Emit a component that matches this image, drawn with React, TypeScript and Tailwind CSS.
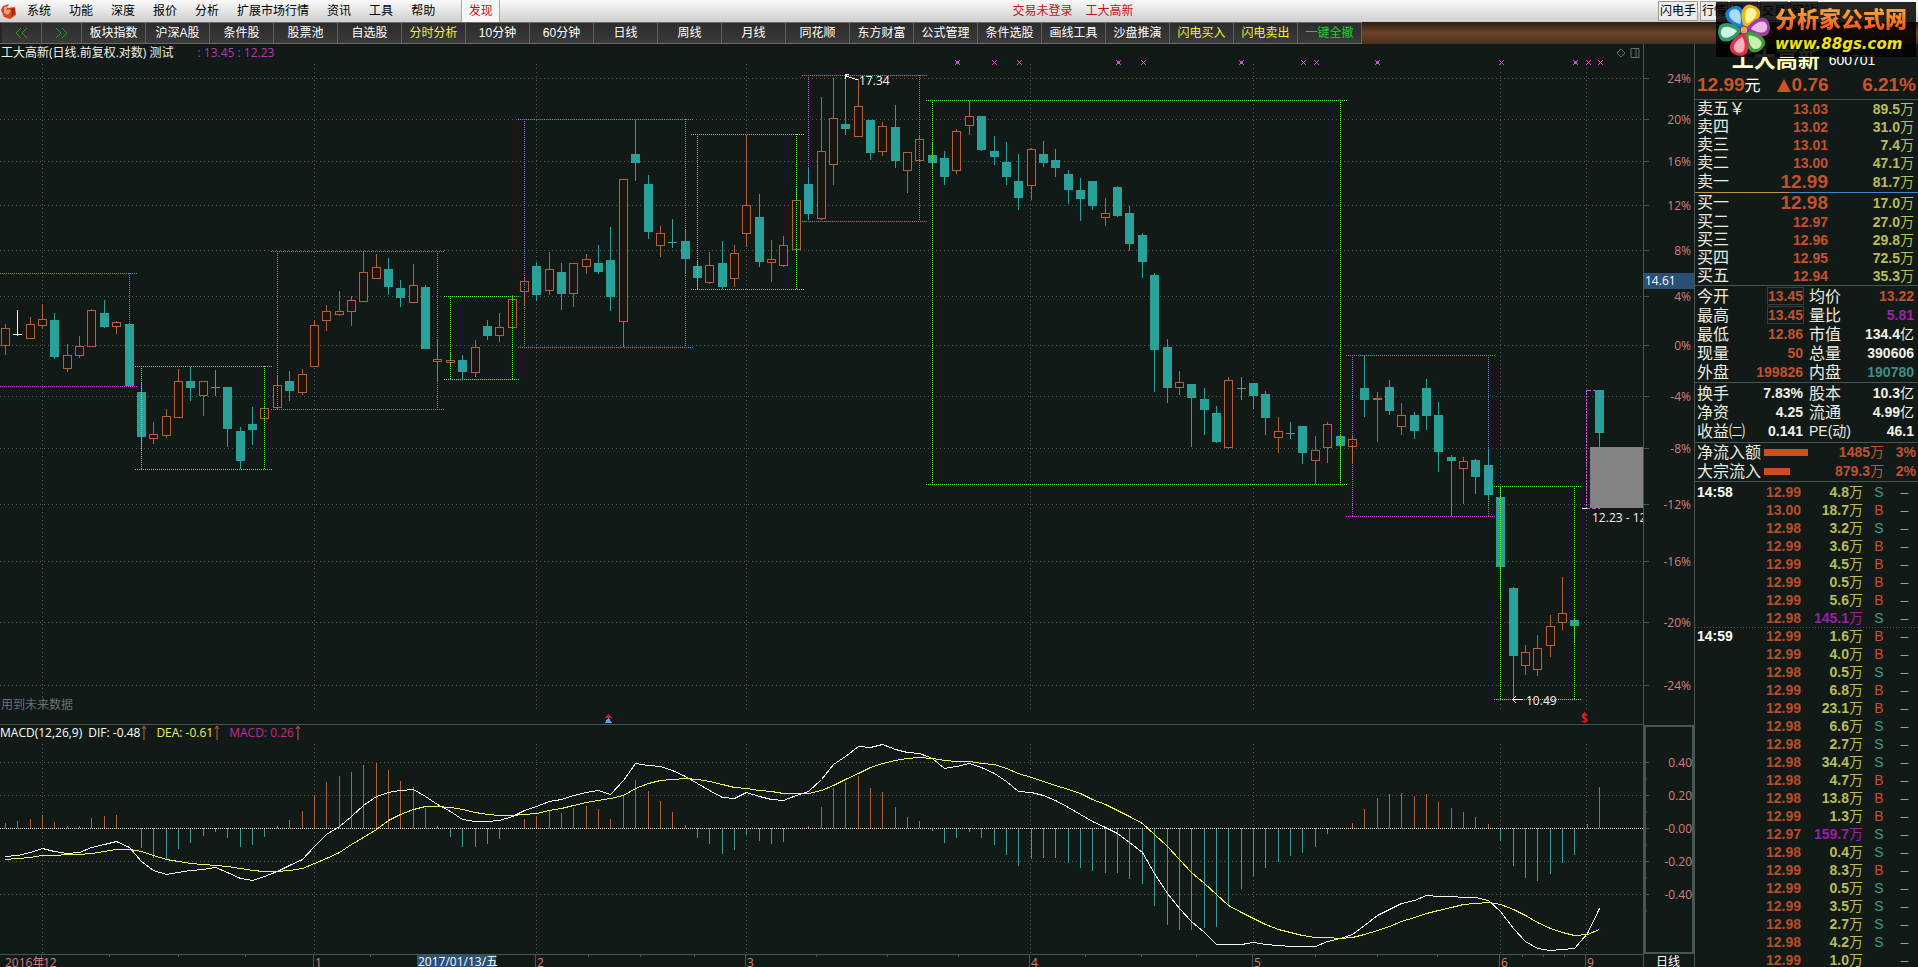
import { clsx } from "clsx";

type Candle = [string, number, number, number, number];

const MENU = ["系统", "功能", "深度", "报价", "分析", "扩展市场行情", "资讯", "工具", "帮助"];

const TOOLS = [
  "板块指数", "沪深A股", "条件股", "股票池", "自选股", "分时分析", "10分钟",
  "60分钟", "日线", "周线", "月线", "同花顺", "东方财富", "公式管理",
  "条件选股", "画线工具", "沙盘推演", "闪电买入", "闪电卖出", "一键全撤",
];
const YELLOW_TOOLS = ["分时分析", "闪电买入", "闪电卖出"];

// kind, high, body top, body bottom, low
// u = up, d = down, x = flat, w = flat (white), n = no trade
const CANDLES: Candle[] = [
  ["u", 324, 328, 346, 355], ["w", 310, 334, 334, 336], ["u", 317, 324, 339, 339],
  ["u", 304, 319, 326, 328], ["d", 313, 320, 357, 359], ["u", 344, 355, 369, 372],
  ["u", 336, 346, 356, 358], ["u", 309, 310, 347, 347], ["d", 300, 313, 327, 328],
  ["u", 321, 322, 327, 334], ["d", 324, 324, 386, 386], ["d", 382, 392, 437, 450],
  ["u", 422, 434, 439, 444], ["u", 409, 416, 436, 438], ["u", 369, 381, 418, 418],
  ["d", 367, 381, 388, 401], ["u", 381, 381, 396, 416], ["x", 370, 387, 387, 396],
  ["d", 387, 387, 429, 447], ["d", 427, 431, 461, 469], ["d", 407, 424, 430, 445],
  ["u", 406, 408, 419, 421], ["u", 376, 385, 408, 409], ["d", 371, 381, 391, 401],
  ["u", 369, 374, 393, 395], ["u", 320, 325, 367, 367], ["u", 305, 311, 321, 331],
  ["u", 291, 311, 315, 316], ["u", 296, 300, 312, 326], ["u", 252, 272, 302, 302],
  ["u", 254, 267, 279, 279], ["d", 258, 269, 287, 295], ["d", 280, 288, 298, 307],
  ["u", 264, 285, 303, 303], ["d", 285, 287, 349, 349], ["u", 340, 359, 362, 382],
  ["u", 352, 360, 363, 366], ["d", 355, 360, 372, 379], ["u", 340, 347, 373, 377],
  ["d", 320, 326, 336, 340], ["u", 313, 327, 336, 342], ["u", 295, 299, 328, 328],
  ["u", 277, 281, 292, 305], ["d", 262, 266, 295, 301], ["u", 252, 269, 291, 295],
  ["d", 263, 272, 294, 310], ["u", 263, 263, 294, 307], ["u", 254, 259, 267, 274],
  ["d", 245, 263, 272, 274], ["d", 227, 260, 297, 311], ["u", 179, 179, 322, 347],
  ["d", 120, 154, 163, 181], ["d", 175, 184, 232, 239], ["u", 226, 233, 246, 257],
  ["x", 219, 242, 242, 248], ["d", 230, 241, 259, 274], ["d", 260, 266, 278, 288],
  ["u", 252, 265, 283, 284], ["d", 241, 263, 287, 289], ["u", 245, 253, 279, 287],
  ["u", 135, 205, 234, 247], ["d", 194, 217, 262, 267], ["u", 240, 259, 263, 282],
  ["u", 236, 245, 266, 267], ["u", 188, 200, 250, 252], ["d", 167, 184, 214, 220],
  ["u", 97, 151, 219, 220], ["u", 78, 118, 165, 185], ["d", 78, 124, 129, 135],
  ["u", 79, 106, 137, 137], ["d", 120, 120, 153, 160], ["u", 122, 126, 152, 156],
  ["d", 105, 127, 161, 168], ["u", 152, 152, 171, 193], ["u", 135, 139, 161, 161],
  ["d", 142, 155, 163, 168], ["d", 151, 158, 177, 185], ["u", 129, 131, 171, 174],
  ["u", 101, 116, 126, 135], ["d", 116, 116, 150, 151], ["d", 136, 151, 157, 165],
  ["d", 142, 162, 177, 185], ["d", 154, 181, 198, 210], ["u", 148, 149, 186, 200],
  ["d", 141, 154, 163, 167], ["d", 149, 160, 168, 177], ["d", 170, 174, 190, 204],
  ["d", 178, 190, 199, 221], ["d", 181, 181, 206, 210], ["u", 198, 213, 218, 226],
  ["d", 186, 187, 216, 217], ["d", 206, 213, 244, 251], ["d", 233, 235, 262, 278],
  ["d", 273, 275, 350, 392], ["d", 339, 347, 388, 403], ["u", 371, 382, 388, 395],
  ["d", 384, 384, 398, 447], ["d", 388, 399, 410, 435], ["d", 406, 413, 442, 443],
  ["u", 377, 380, 448, 449], ["x", 377, 388, 388, 400], ["d", 383, 383, 396, 409],
  ["d", 391, 394, 418, 435], ["u", 417, 431, 438, 453], ["x", 422, 433, 433, 439],
  ["d", 426, 426, 453, 464], ["u", 436, 450, 461, 484], ["u", 422, 424, 448, 463],
  ["d", 435, 436, 446, 481], ["u", 435, 439, 447, 463], ["d", 355, 388, 400, 417],
  ["u", 392, 398, 399, 442], ["d", 380, 387, 411, 415], ["u", 403, 415, 427, 435],
  ["d", 412, 415, 431, 439], ["d", 379, 388, 416, 430], ["d", 402, 415, 452, 472],
  ["d", 455, 457, 461, 516], ["u", 457, 461, 469, 504], ["d", 459, 460, 477, 494],
  ["d", 449, 465, 495, 499], ["d", 487, 497, 567, 600], ["d", 587, 588, 656, 700],
  ["u", 645, 652, 666, 675], ["u", 635, 648, 670, 676], ["u", 615, 626, 646, 657],
  ["u", 577, 613, 623, 630], ["d", 618, 620, 626, 643], ["n", 0, 0, 0, 0],
  ["d", 390, 390, 433, 447],
];

// first bar, last bar, top, bottom, colour
const BOXES: [number, number, number, number, string][] = [
  [-2, 10, 273, 386, "p"], [11, 21, 366, 469, "g"], [22, 35, 251, 409, "p"],
  [36, 41, 296, 379, "g"], [42, 55, 119, 347, "p"], [56, 64, 134, 289, "g"],
  [65, 74, 75, 221, "p"], [75, 108, 100, 484, "g"], [109, 120, 355, 516, "p"],
  [121, 127, 486, 699, "g"],
];

const HIST = [
  823, 821, 819, 815, 822, 826, 826, 818, 816, 815, 828, 848, 858, 859, 849, 843, 836, 832, 838, 847,
  845, 837, 826, 820, 811, 795, 782, 776, 772, 765, 763, 770, 781, 787, 808, 826, 837, 847, 847, 844,
  839, 828, 819, 816, 811, 813, 808, 806, 809, 819, 795, 780, 791, 801, 812, 825, 838, 844, 854, 850,
  835, 841, 844, 842, 828, 826, 807, 788, 782, 776, 788, 792, 807, 817, 821, 831, 843, 838, 832, 838,
  845, 855, 866, 859, 858, 858, 863, 868, 871, 873, 873, 879, 884, 906, 925, 930, 930, 928, 927, 905,
  889, 876, 868, 862, 856, 853, 847, 834, 828, 823, 809, 798, 794, 793, 796, 794, 802, 808, 812, 817,
  824, 841, 866, 878, 881, 874, 863, 855, 824, 787,
];

const DIF = [
  856, 855, 852, 848, 851, 853, 852, 847, 844, 841, 847, 861, 870, 874, 872, 870, 869, 867, 872, 878,
  880, 876, 871, 865, 859, 846, 834, 826, 816, 805, 796, 792, 790, 789, 796, 804, 811, 819, 821, 821,
  820, 816, 810, 806, 801, 799, 795, 792, 790, 794, 780, 763, 765, 766, 770, 776, 783, 790, 797, 798,
  792, 796, 799, 800, 795, 791, 779, 764, 756, 746, 747, 744, 749, 752, 753, 758, 768, 766, 763, 767,
  773, 781, 791, 792, 795, 800, 807, 814, 821, 827, 833, 842, 852, 873, 893, 908, 921, 932, 944, 944,
  944, 942, 944, 945, 946, 946, 946, 941, 938, 934, 925, 915, 909, 903, 900, 895, 896, 896, 897, 897,
  900, 911, 928, 941, 948, 950, 949, 948, 933, 908,
];

const DEA = [
  859, 858, 857, 855, 855, 854, 854, 853, 851, 849, 849, 851, 855, 859, 861, 863, 864, 865, 866, 868,
  870, 871, 871, 870, 868, 863, 858, 852, 844, 837, 829, 820, 814, 809, 806, 806, 807, 809, 812, 814,
  815, 815, 814, 813, 810, 808, 805, 802, 800, 798, 795, 788, 783, 780, 779, 778, 779, 781, 784, 787,
  788, 790, 791, 793, 793, 793, 790, 785, 779, 773, 767, 763, 760, 758, 757, 758, 760, 761, 761, 763,
  764, 768, 773, 777, 781, 785, 789, 793, 799, 804, 810, 816, 823, 834, 846, 859, 872, 883, 894, 905,
  912, 918, 924, 929, 932, 935, 937, 937, 938, 937, 934, 930, 926, 921, 917, 913, 910, 907, 904, 903,
  902, 904, 909, 915, 922, 928, 932, 935, 934, 929,
];

const PRICE_TICKS: [string, number][] = [
  ["24%", 78], ["20%", 119], ["16%", 161], ["12%", 205], ["8%", 250], ["4%", 296],
  ["0%", 345], ["-4%", 396], ["-8%", 448], ["-12%", 504], ["-16%", 561], ["-20%", 622],
  ["-24%", 685],
];
const MACD_TICKS: [string, number][] = [
  ["0.40", 762], ["0.20", 795], ["-0.00", 828], ["-0.20", 861], ["-0.40", 894],
];
const MONTHS: [string, number][] = [
  ["", 42], ["1", 314], ["2", 536], ["3", 746], ["4", 1030], ["5", 1253], ["6", 1500], ["9", 1586],
];
const MINOR = [109, 178, 245, 370, 588, 640, 694, 816, 887, 958, 1085, 1141, 1196, 1315, 1377, 1437, 1522, 1543, 1564];
const SIGNALS = [957, 994, 1019, 1118, 1143, 1241, 1303, 1316, 1377, 1501, 1575, 1588, 1600];
const BOLD_SIGNALS = [957, 1118, 1241, 1377, 1575];

const ASKS = [["卖五￥", "13.03", "89.5"], ["卖四", "13.02", "31.0"], ["卖三", "13.01", "7.4"], ["卖二", "13.00", "47.1"], ["卖一", "12.99", "81.7"]];
const BIDS = [["买一", "12.98", "17.0"], ["买二", "12.97", "27.0"], ["买三", "12.96", "29.8"], ["买四", "12.95", "72.5"], ["买五", "12.94", "35.3"]];

const RED = "text-[#c2512f]";
const WHITE = "text-[#f2f2e8]";
const STATS = [
  ["今开", "13.45", RED, "均价", "13.22", RED],
  ["最高", "13.45", RED, "量比", "5.81", "text-[#a020a8]"],
  ["最低", "12.86", RED, "市值", "134.4亿", WHITE],
  ["现量", "50", RED, "总量", "390606", WHITE],
  ["外盘", "199826", RED, "内盘", "190780", "text-[#3d8f8c]"],
];
const BASICS = [
  ["换手", "7.83%", WHITE, "股本", "10.3亿", WHITE],
  ["净资", "4.25", WHITE, "流通", "4.99亿", WHITE],
  ["收益㈡", "0.141", WHITE, "PE(动)", "46.1", WHITE],
];

const TRADES = [
  "14:58 12.99 4.8 S", "- 13.00 18.7 B", "- 12.98 3.2 S", "- 12.99 3.6 B", "- 12.99 4.5 B",
  "- 12.99 0.5 B", "- 12.99 5.6 B", "- 12.98 145.1 S", "14:59 12.99 1.6 B", "- 12.99 4.0 B",
  "- 12.98 0.5 S", "- 12.99 6.8 B", "- 12.99 23.1 B", "- 12.98 6.6 S", "- 12.98 2.7 S",
  "- 12.98 34.4 S", "- 12.98 4.7 B", "- 12.98 13.8 B", "- 12.99 1.3 B", "- 12.97 159.7 S",
  "- 12.98 0.4 S", "- 12.99 8.3 B", "- 12.99 0.5 S", "- 12.99 3.5 S", "- 12.98 2.7 S",
  "- 12.98 4.2 S", "- 12.99 1.0 -",
].map((t) => t.split(" "));

const xOf = (i: number) => Math.round(5 + i * 12.357) + 0.5;
const points = (ys: number[]) => ys.map((y, i) => `${xOf(i)},${y + 0.5}`).join(" ");

const UP = "#b3603c";
const DOWN = "#2aa198";
const LINE = "#475654";
const GRID = "#505e5a";
const PINK = "#d848d8";
const GREEN = "#5cf048";

const MenuBar = () => (
  <header className="flex h-[22px] items-center bg-linear-to-b from-[#fafafa] to-[#cfcfcf] text-xs text-black">
    <svg className="ml-px h-4 w-4" viewBox="0 0 16 16">
      <path d="M2 3 8 1 6 5 14 4 15 12 9 16 3 14 0 7Z" fill="#d9431c" />
      <path d="M3 4 7 3 5 7 11 6 7 12 3 10Z" fill="#f7a27a" />
      <path d="M9 6 14 5 14 10 10 14 11 9Z" fill="#a52410" />
    </svg>
    <nav className="ml-[10px] flex gap-[18px] whitespace-nowrap">
      {MENU.map((m) => (
        <button key={m}>{m}</button>
      ))}
    </nav>
    <button className="ml-[26px] h-full w-[39px] border-x border-[#a9a9a9] bg-[#f6f6f6] text-[#c01818]">发现</button>
    <div className="flex flex-1 justify-center gap-[13px] pr-3 whitespace-nowrap text-[#c01818]">
      <span>交易未登录</span>
      <span>工大高新</span>
    </div>
    <div className="flex gap-[2px] pr-25">
      {["闪电手", "行情", "资讯", "交易", "网站"].map((b) => (
        <button key={b} className="h-5 border border-[#9a9a9a] bg-[#ececec] px-px whitespace-nowrap">
          {b}
        </button>
      ))}
    </div>
  </header>
);

const ToolBar = () => (
  <div className="flex h-[22px] bg-linear-to-b from-[#2c1d14] via-[#6b4327] to-[#4a2f1e] text-xs">
    <div className="flex border-y border-[#6f6a64] bg-[#262626] pl-[2px]">
      {["M6 1 1 6 6 11M12 1 7 6 12 11", "M1 1 6 6 1 11M7 1 12 6 7 11"].map((d, i) => (
        <button
          key={d}
          aria-label={i ? "next" : "previous"}
          className="flex w-10 items-center justify-center border-r border-[#6e5a44] bg-linear-to-b from-[#2c2c2c] to-[#3a3a3a]"
        >
          <svg className="h-3 w-[13px]" viewBox="0 0 13 12" fill="none" stroke="#22a02c">
            <path d={d} />
          </svg>
        </button>
      ))}
      {TOOLS.map((t) => (
        <button
          key={t}
          className={clsx(
            "w-16 border-r border-[#6e5a44] bg-linear-to-b from-[#2c2c2c] to-[#3a3a3a] whitespace-nowrap",
            YELLOW_TOOLS.includes(t) ? "text-[#f0f040]" : t === "一键全撤" ? "text-[#20d030]" : "text-white",
          )}
        >
          {t}
        </button>
      ))}
    </div>
  </div>
);

const PriceChart = () => (
  <svg className="block h-[664px] w-full" viewBox="0 60 1643 664" preserveAspectRatio="none" shapeRendering="crispEdges">
    <g stroke={GRID} strokeDasharray="1 3">
      {PRICE_TICKS.map(([t, y]) => (
        <line key={t} x1="0" x2="1643" y1={y + 0.5} y2={y + 0.5} />
      ))}
      {MONTHS.map(([, x]) => (
        <line key={x} x1={x + 0.5} x2={x + 0.5} y1="64" y2="709" />
      ))}
    </g>
    <rect x="1590" y="447" width="53" height="61" fill="#838383" />
    {CANDLES.map(([kind, high, top, bottom, low], i) => {
      const x = xOf(i);
      if (kind === "n") return null;
      if (kind === "x" || kind === "w") {
        return (
          <path
            key={i}
            d={`M${x} ${high}V${low}M${x - 4.5} ${top + 0.5}h9`}
            stroke={kind === "w" ? "#f4f4dc" : "#4f9c96"}
          />
        );
      }
      if (kind === "d") {
        return (
          <g key={i}>
            <line x1={x} x2={x} y1={high} y2={low} stroke={DOWN} />
            <rect x={x - 4.5} y={top} width="9" height={bottom - top} fill={DOWN} />
          </g>
        );
      }
      return (
        <g key={i} stroke={UP} fill="none">
          <path d={`M${x} ${high}V${top}M${x} ${bottom}V${low}`} />
          <rect x={x - 4} y={top + 0.5} width="8" height={Math.max(bottom - top - 1, 1)} fill="#1a1511" />
        </g>
      );
    })}
    {BOXES.map(([a, b, top, bottom, color]) => (
      <path
        key={a}
        d={`M${xOf(a) - 6.5} ${top + 0.5}H${xOf(b) + 7}M${xOf(a) - 6.5} ${bottom + 0.5}H${xOf(b) + 7}M${xOf(a)} ${top}V${bottom}M${xOf(b)} ${top}V${bottom}`}
        stroke={color === "p" ? PINK : GREEN}
        strokeDasharray="1 1"
        fill="none"
      />
    ))}
    <path d="M1586.5 390V508M1599.5 390V508" stroke={PINK} strokeDasharray="2 1" />
    <path d="M1587 390.5h8M1586 508.5h14" stroke={PINK} strokeDasharray="4 2" />
    <path d="M1582 508.5h5" stroke="#fff" />
    {SIGNALS.map((x) => (
      <g key={x} stroke={PINK}>
        <path d={`M${x - 2} 60 ${x + 3} 65M${x + 3} 60 ${x - 2} 65`} />
        {BOLD_SIGNALS.includes(x) && <rect x={x - 1} y="61" width="3" height="3" fill={PINK} stroke="none" />}
      </g>
    ))}
    <g stroke="#fff" fill="none">
      <path d="M858 80 845 75.500M849 74H845.500V79" />
      <path d="M1523 699.500H1513M1516 696 1512.500 699.500 1516 703" />
    </g>
    <g fill="#f4f4f4" fontSize="12">
      <text x="859" y="85">17.34</text>
      <text x="1526" y="705">10.49</text>
      <text x="1592" y="522">12.23 - 12.99</text>
    </g>
    <text x="1" y="709" fontSize="12" fill="#6b6f6d">用到未来数据</text>
    <path d="M608.500 714 605 718H612Z" fill="#c02020" />
    <path d="M608.500 718 604.500 723H612.500Z" fill="#5aa8e8" />
    <text x="1581" y="723" fontSize="12" fontWeight="700" fill="#d02020">$</text>
    <path d="M1584.500 712 1582 715H1587Z" fill="#d02020" />
  </svg>
);

const MacdChart = () => (
  <svg className="block h-[212px] w-full" viewBox="0 742 1643 212" preserveAspectRatio="none" shapeRendering="crispEdges">
    <g stroke={GRID} strokeDasharray="1 3">
      {MACD_TICKS.map(([t, y]) => (
        <line key={t} x1="0" x2="1643" y1={y + 0.5} y2={y + 0.5} />
      ))}
      {MONTHS.map(([, x]) => (
        <line key={x} x1={x + 0.5} x2={x + 0.5} y1="744" y2="954" />
      ))}
    </g>
    {HIST.map((y, i) => (
      <line key={i} x1={xOf(i)} x2={xOf(i)} y1="828" y2={y} stroke={y < 828 ? UP : "#3f9a93"} />
    ))}
    <line x1="0" x2="1643" y1="828.5" y2="828.5" stroke="#f0f0e0" strokeDasharray="1 1" />
    <polyline points={points(DIF)} fill="none" stroke="#f4f4ec" />
    <polyline points={points(DEA)} fill="none" stroke="#eef060" />
  </svg>
);

const PriceAxis = () => (
  <div className="w-[52px] border-x border-[#475654]">
    <svg className="block h-[681px] w-full" viewBox="1644 44 50 681" fontSize="12" fill="#d87f78">
      {PRICE_TICKS.map(([t, y]) => (
        <g key={t}>
          <line x1="1644" x2="1649" y1={y + 0.5} y2={y + 0.5} stroke={LINE} />
          <text x="1691" y={y + 5} textAnchor="end">{t}</text>
        </g>
      ))}
      <rect x="1644" y="273" width="50" height="16" fill="#2a4f78" />
      <text x="1645" y="285" fill="#fff">14.61</text>
    </svg>
    <svg className="block h-[229px] w-full border-2 border-[#475654]" viewBox="1646 727 46 225" fontSize="12" fill="#d87f78">
      {MACD_TICKS.map(([t, y]) => (
        <g key={t}>
          <path d={`M1646 ${y + 0.5}h3M1646 ${y + 17}h1`} stroke={LINE} />
          <text x="1692" y={y + 5} textAnchor="end">{t}</text>
        </g>
      ))}
    </svg>
    <div className="pl-3 text-xs leading-4 text-white">日线</div>
  </div>
);

const DateAxis = () => (
  <svg className="block h-[13px] w-full" viewBox="0 954 1643 13" preserveAspectRatio="none" fontSize="12" fill="#d87f78">
    <line x1="0" x2="1643" y1="954.5" y2="954.5" stroke={LINE} />
    {MINOR.map((x) => (
      <line key={x} x1={x + 0.5} x2={x + 0.5} y1="954" y2="957" stroke={LINE} />
    ))}
    {MONTHS.map(([t, x]) => (
      <g key={x}>
        <line x1={x - 0.5} x2={x - 0.5} y1="954" y2="967" stroke={LINE} />
        <text x={x + 1} y="967">{t}</text>
      </g>
    ))}
    <text x="5" y="967">2016年</text>
    <text x="43" y="967">12</text>
    <rect x="417" y="955" width="79" height="12" fill="#2a4f78" />
    <text x="418" y="966" fill="#fff">2017/01/13/五</text>
  </svg>
);

const Arrow = () => (
  <svg className="mx-px h-4 w-[6px]" viewBox="0 0 6 16" stroke="#c2603c" fill="none">
    <path d="M3 1V15M1 4 3 1 5 4" />
  </svg>
);

const QuoteTable = ({ rows, best }: { rows: string[][]; best: string }) => (
  <table className="w-full table-fixed leading-[18px]">
    <tbody>
      {rows.map(([label, price, vol]) => (
        <tr key={label} className={label === best ? "h-5" : "h-[18px]"}>
          <th className="w-14 p-0 pl-[2px] text-left text-base leading-[18px] font-normal whitespace-nowrap text-[#ecece0]">{label}</th>
          <td className={clsx("w-[77px] p-0 text-right font-bold text-[#c2512f]", label === best ? "text-[19px] leading-[18px]" : "text-sm leading-[18px]")}>{price}</td>
          <td className="p-0 pr-1 text-right text-sm leading-[18px] font-bold text-[#b9bd5c]">
            {vol}
            <span className="font-normal">万</span>
          </td>
        </tr>
      ))}
    </tbody>
  </table>
);

const StatTable = ({ rows }: { rows: string[][] }) => (
  <table className="w-full table-fixed">
    <tbody>
      {rows.map(([l1, v1, c1, l2, v2, c2]) => (
        <tr key={l1} className="h-[19px]">
          <th className="w-[54px] p-0 pl-[2px] text-left text-base leading-[19px] font-normal whitespace-nowrap text-[#ecece0]">{l1}</th>
          <td className={clsx("w-[54px] p-0 text-right text-sm leading-[19px] font-bold", c1)}>
            <span className={clsx(v1 === "13.45" && "outline outline-[#34403e]")}>{v1}</span>
          </td>
          <th className={clsx("w-12 p-0 pl-[6px] text-left leading-[19px] font-normal whitespace-nowrap text-[#ecece0]", l2 === "PE(动)" ? "text-sm" : "text-base")}>{l2}</th>
          <td className={clsx("p-0 pr-1 text-right text-sm leading-[19px] font-bold", c2)}>
            {v2.replace("亿", "")}
            {v2.endsWith("亿") && <span className="font-normal">亿</span>}
          </td>
        </tr>
      ))}
    </tbody>
  </table>
);

const Flow = ({ label, bar, value, pct }: { label: string; bar: string; value: string; pct: string }) => (
  <div className="flex h-[19px] items-center pr-[2px] pl-[2px] text-sm text-[#c2512f]">
    <span className="w-[67px] text-base leading-[19px] whitespace-nowrap text-[#ecece0]">{label}</span>
    <span className={clsx("h-[7px] bg-[#c8501e]", bar)} />
    <span className="ml-auto leading-[19px] font-bold">{value}<span className="font-normal">万</span></span>
    <span className="w-8 text-right leading-[19px] font-bold">{pct}</span>
  </div>
);

const QuotePanel = () => (
  <aside className="w-[223px] shrink-0 [&>*]:border-[#475654]">
    <div className="flex h-7 items-center justify-center gap-[9px] pt-[3px] pr-[6px] text-[#ffffc0]">
      <h1 className="text-[22px] font-bold">工大高新</h1>
      <span className="text-sm text-white">600701</span>
    </div>
    <div className="flex h-7 items-center border-b pr-[2px] pl-[2px] text-[19px] font-bold text-[#cf5224]">
      <span>12.99</span>
      <span className="text-base font-normal text-white">元</span>
      <span className="ml-4 flex items-center gap-px">
        <svg className="h-[13px] w-[14px]" viewBox="0 0 14 13"><path d="M7 0 14 13H0Z" fill="#cf5224" /></svg>
        0.76
      </span>
      <span className="ml-auto">6.21%</span>
    </div>
    <div className="h-[92px]">
      <QuoteTable rows={ASKS} best="卖一" />
    </div>
    <div className="h-px bg-[linear-gradient(90deg,#c0954a_42%,#3f88c8_42%)]" />
    <div className="h-[93px] border-b">
      <QuoteTable rows={BIDS} best="买一" />
    </div>
    <div className="h-[97px] border-b pt-px">
      <StatTable rows={STATS} />
    </div>
    <div className="h-[60px] border-b pt-px">
      <StatTable rows={BASICS} />
    </div>
    <div className="border-b">
      <Flow label="净流入额" bar="w-11" value="1485" pct="3%" />
      <Flow label="大宗流入" bar="w-[26px]" value="879.3" pct="2%" />
    </div>
    <table className="mt-px w-full table-fixed text-sm">
      <tbody>
        {TRADES.map(([time, price, vol, side], i) => (
          <tr key={i} className={clsx("h-[18px]", i === 8 && "bg-[repeating-linear-gradient(90deg,#475654_0_1px,transparent_1px_3px)] bg-[length:100%_1px] bg-no-repeat")}>
            <td className="w-11 p-0 pl-[2px] leading-[18px] font-bold text-white">{time === "-" ? "" : time}</td>
            <td className="w-[62px] p-0 text-right leading-[18px] font-bold text-[#b84e2c]">{price}</td>
            <td className={clsx("w-[62px] p-0 text-right leading-[18px] font-bold", vol.length > 4 ? "text-[#9a1fa8]" : "text-[#b9bd5c]")}>
              {vol}
              <span className="font-normal">万</span>
            </td>
            <td className={clsx("w-8 p-0 text-center leading-[18px]", side === "S" ? "text-[#3f9a93]" : "text-[#c2512f]")}>{side === "-" ? "" : side}</td>
            <td className="p-0 pr-1 text-center leading-[18px] text-[#9a9f98]">–</td>
          </tr>
        ))}
      </tbody>
    </table>
  </aside>
);

const PETALS: [number, string, string][] = [
  [-32, "#1f7fd0", "#a8dcf8"], [22, "#e8b818", "#fff6a0"], [80, "#9a3fa0", "#f0b8e8"],
  [138, "#3f9a40", "#c8f0b0"], [195, "#d8304a", "#f8b0b8"], [262, "#2f9a70", "#d0f4e0"],
];

const SiteBadge = () => (
  <a href="#" className="absolute top-[2px] right-[2px] flex h-[55px] w-50 items-center bg-black/85">
    <svg className="ml-px h-[54px] w-[54px]" viewBox="-27 -27 54 54">
      {PETALS.map(([deg, outer, inner]) => (
        <g key={deg} transform={`rotate(${deg})`}>
          <path d="M0 -2C-7 -8 -12 -18 -7 -24C-3 -27 4 -27 8 -23C12 -17 7 -8 0 -2Z" fill={outer} />
          <path d="M0 -7C-4 -11 -7 -18 -4 -22C-1 -24 2 -24 5 -21C7 -17 4 -11 0 -7Z" fill={inner} />
        </g>
      ))}
      <circle r="4" fill="#e8a060" stroke="#7a3a60" />
    </svg>
    <span className="ml-1 flex flex-col whitespace-nowrap">
      <span className="bg-linear-to-b from-[#ffb040] to-[#e83a10] bg-clip-text text-[22px] leading-7 font-black text-transparent">分析家公式网</span>
      <span className="font-['DejaVu_Sans'] text-[15px] leading-5 font-bold text-[#f0e020] italic">www.88gs.com</span>
    </span>
  </a>
);

export default function App() {
  return (
    <div className="relative h-screen overflow-hidden bg-[#111a17] font-['Liberation_Sans','Noto_Sans_CJK_SC',sans-serif]">
      <MenuBar />
      <ToolBar />
      <main className="flex">
        <section className="min-w-0 flex-1 font-['Open_Sans','Noto_Sans_CJK_SC',sans-serif]">
          <div className="flex h-4 justify-between pr-[2px] text-xs leading-[18px] whitespace-nowrap text-[#f2f2e8]">
            <h2 className="flex gap-6 pl-px">
              工大高新(日线.前复权.对数) 测试
              <span className="text-[#b838b8]">: 13.45 : 12.23</span>
            </h2>
            <svg className="mt-[3px] h-3 w-7" viewBox="0 0 28 12" fill="none" stroke="#5f7078">
              <path d="M8 2 12 6 8 10 4 6ZM18 1.500h8v9h-8ZM23 1.500v9" />
            </svg>
          </div>
          <PriceChart />
          <div className="flex h-[18px] items-start border-t border-[#475654] text-xs leading-4 whitespace-nowrap">
            <span className="text-white">MACD(12,26,9)</span>
            <span className="ml-[6px] text-white">DIF: -0.48</span>
            <Arrow />
            <span className="ml-2 text-[#eef060]">DEA: -0.61</span>
            <Arrow />
            <span className="ml-2 text-[#c82890]">MACD: 0.26</span>
            <Arrow />
          </div>
          <MacdChart />
          <DateAxis />
        </section>
        <div className="shrink-0 font-['Open_Sans','Noto_Sans_CJK_SC',sans-serif]">
          <PriceAxis />
        </div>
        <QuotePanel />
      </main>
      <SiteBadge />
    </div>
  );
}
